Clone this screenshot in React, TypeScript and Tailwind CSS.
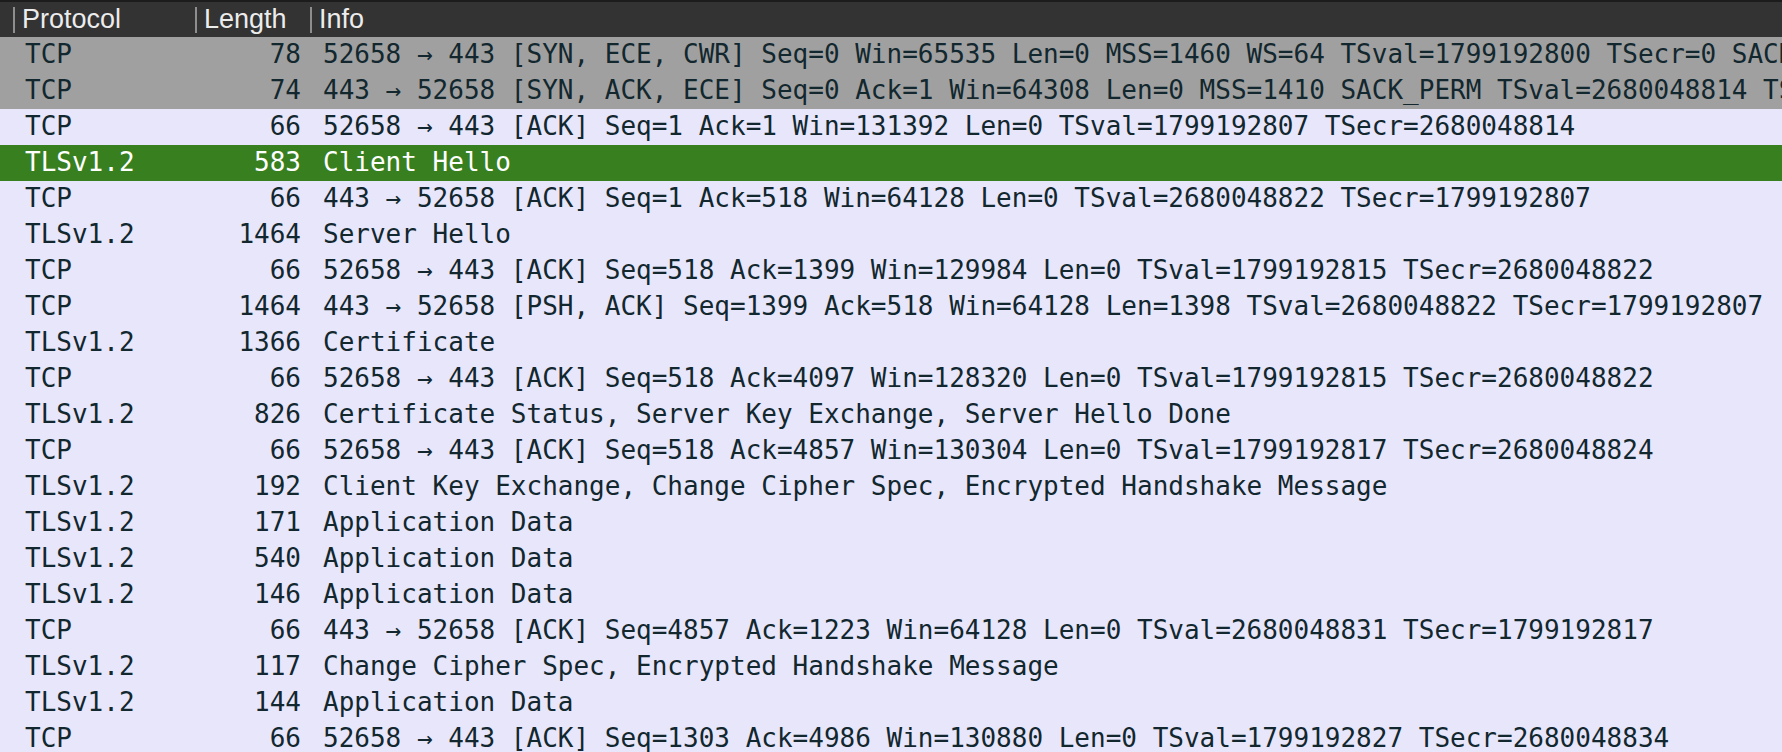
import React from "react";

type Row = { p: string; l: string; i: string; kind?: "gray" | "sel" };

const rows: Row[] = [
  { p: "TCP", l: "78", i: "52658 → 443 [SYN, ECE, CWR] Seq=0 Win=65535 Len=0 MSS=1460 WS=64 TSval=1799192800 TSecr=0 SACK_PERM", kind: "gray" },
  { p: "TCP", l: "74", i: "443 → 52658 [SYN, ACK, ECE] Seq=0 Ack=1 Win=64308 Len=0 MSS=1410 SACK_PERM TSval=2680048814 TSecr=1799192800 WS=128", kind: "gray" },
  { p: "TCP", l: "66", i: "52658 → 443 [ACK] Seq=1 Ack=1 Win=131392 Len=0 TSval=1799192807 TSecr=2680048814" },
  { p: "TLSv1.2", l: "583", i: "Client Hello", kind: "sel" },
  { p: "TCP", l: "66", i: "443 → 52658 [ACK] Seq=1 Ack=518 Win=64128 Len=0 TSval=2680048822 TSecr=1799192807" },
  { p: "TLSv1.2", l: "1464", i: "Server Hello" },
  { p: "TCP", l: "66", i: "52658 → 443 [ACK] Seq=518 Ack=1399 Win=129984 Len=0 TSval=1799192815 TSecr=2680048822" },
  { p: "TCP", l: "1464", i: "443 → 52658 [PSH, ACK] Seq=1399 Ack=518 Win=64128 Len=1398 TSval=2680048822 TSecr=1799192807 [TCP segment of a reassembled PDU]" },
  { p: "TLSv1.2", l: "1366", i: "Certificate" },
  { p: "TCP", l: "66", i: "52658 → 443 [ACK] Seq=518 Ack=4097 Win=128320 Len=0 TSval=1799192815 TSecr=2680048822" },
  { p: "TLSv1.2", l: "826", i: "Certificate Status, Server Key Exchange, Server Hello Done" },
  { p: "TCP", l: "66", i: "52658 → 443 [ACK] Seq=518 Ack=4857 Win=130304 Len=0 TSval=1799192817 TSecr=2680048824" },
  { p: "TLSv1.2", l: "192", i: "Client Key Exchange, Change Cipher Spec, Encrypted Handshake Message" },
  { p: "TLSv1.2", l: "171", i: "Application Data" },
  { p: "TLSv1.2", l: "540", i: "Application Data" },
  { p: "TLSv1.2", l: "146", i: "Application Data" },
  { p: "TCP", l: "66", i: "443 → 52658 [ACK] Seq=4857 Ack=1223 Win=64128 Len=0 TSval=2680048831 TSecr=1799192817" },
  { p: "TLSv1.2", l: "117", i: "Change Cipher Spec, Encrypted Handshake Message" },
  { p: "TLSv1.2", l: "144", i: "Application Data" },
  { p: "TCP", l: "66", i: "52658 → 443 [ACK] Seq=1303 Ack=4986 Win=130880 Len=0 TSval=1799192827 TSecr=2680048834" },
];

function HeaderCell({ label, w }: { label: string; w: string }) {
  return (
    <div className={`flex items-center h-full ${w}`}>
      <div className="w-[2px] h-[26px] bg-[#8e8e8e]" />
      <span className="ml-[7px] text-[27px] text-[#ececec] font-['Liberation_Sans',Arial,sans-serif] leading-none">
        {label}
      </span>
    </div>
  );
}

export default function App() {
  return (
    <div className="w-[1782px] h-[752px] overflow-hidden bg-[#e7e6fb]">
      <div className="h-[37px] bg-[#333333] border-t-[2px] border-[#1c1c1c] flex items-center pl-[13px]">
        <HeaderCell label="Protocol" w="w-[182px]" />
        <HeaderCell label="Length" w="w-[115px]" />
        <HeaderCell label="Info" w="flex-1" />
      </div>
      <div className="font-['DejaVu_Sans_Mono',monospace] text-[26px]">
        {rows.map((r, idx) => {
          const bg =
            r.kind === "gray"
              ? "bg-[#a0a0a0] text-[#12272e]"
              : r.kind === "sel"
              ? "bg-[#38801f] text-white"
              : "bg-[#e7e6fb] text-[#12272e]";
          return (
            <div key={idx} className={`flex h-[36px] pb-[3px] items-center whitespace-pre overflow-hidden leading-none ${bg}`}>
              <span className="pl-[25px] w-[195px] shrink-0">{r.p}</span>
              <span className="w-[106px] shrink-0 text-right">{r.l}</span>
              <span className="ml-[22px]">{r.i}</span>
            </div>
          );
        })}
      </div>
    </div>
  );
}
